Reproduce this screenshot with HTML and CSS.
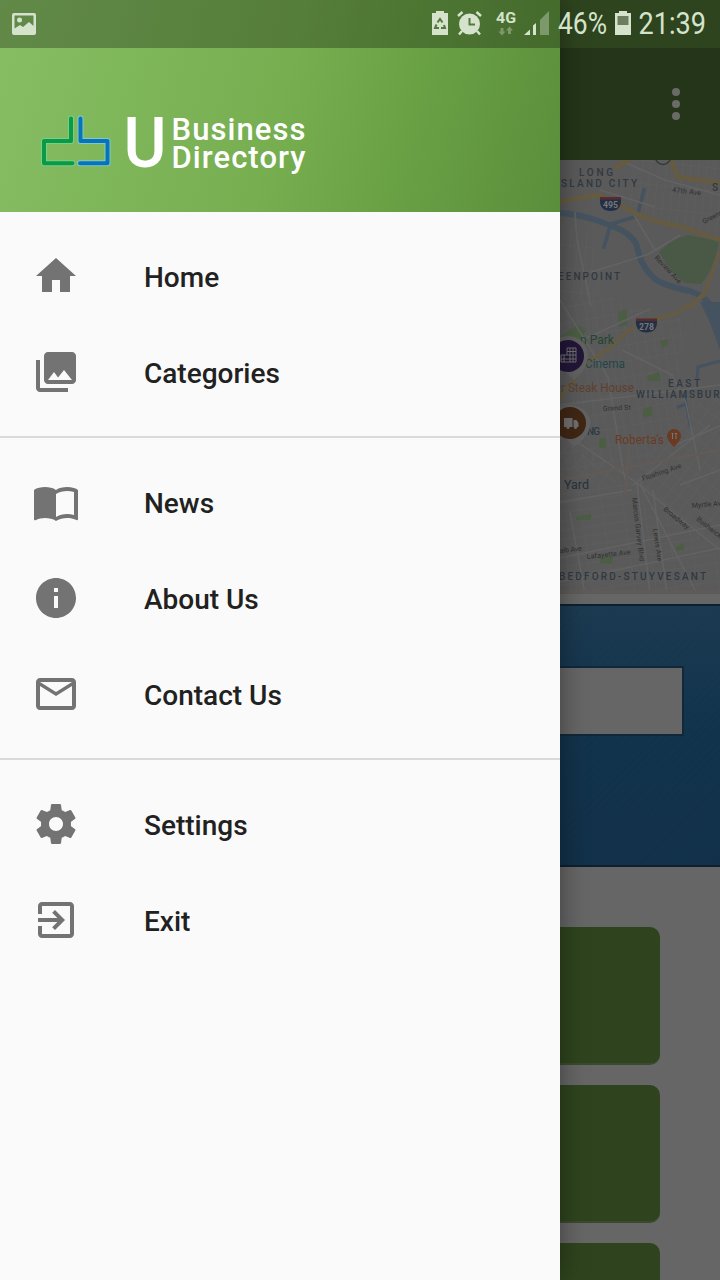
FILE: index.html
```html
<!DOCTYPE html>
<html lang="en">
<head>
<meta charset="utf-8">
<title>U Business Directory</title>
<link rel="stylesheet" href="styles.css">
</head>
<body>
<div class="screen">
  <main class="page">
    <header class="toolbar">
      <svg class="more" width="8" height="32" viewBox="0 0 8 32"><circle cx="4" cy="4" r="4"/><circle cx="4" cy="16" r="4"/><circle cx="4" cy="28" r="4"/></svg>
    </header>
    <svg class="map" width="160" height="434" viewBox="560 160 160 434">
      <defs>
        <pattern id="gridA" width="8" height="23" patternUnits="userSpaceOnUse" patternTransform="rotate(6)"><path d="M0 0V23M0 0H8"/></pattern>
        <pattern id="gridB" width="9" height="16" patternUnits="userSpaceOnUse" patternTransform="rotate(-10)"><path d="M0 0V16M0 0H9"/></pattern>
        <pattern id="gridC" width="21" height="9" patternUnits="userSpaceOnUse" patternTransform="rotate(-8)"><path d="M0 0V9M0 0H21"/></pattern>
        <pattern id="gridD" width="10" height="14" patternUnits="userSpaceOnUse" patternTransform="rotate(38)"><path d="M0 0V14M0 0H10"/></pattern>
      </defs>
      <rect class="land" x="560" y="160" width="160" height="434"/>
      <path fill="url(#gridA)" d="M630 160H720V240L665 222 630 210ZM560 225L590 235 605 290 560 305Z"/>
      <path fill="url(#gridB)" d="M560 305L605 295 645 310 690 320 680 360 700 400 640 470H560Z"/>
      <path fill="url(#gridC)" d="M560 485L640 475 720 560V594H560Z"/>
      <path fill="url(#gridD)" d="M632 478L700 400 720 395V560ZM560 430L630 480 560 490Z"/>
      <path class="park" d="M659 252Q670 240 688 235L719 241Q714 270 701 284L685 283 672 272Z"/>
      <path class="green" d="M618 312L627 309V325L619 327ZM647 376L659 372 661 381 648 381ZM643 409L652 406V416L643 417ZM599 438H606V448H599ZM576 517L591 514V520H576ZM600 558L613 556 612 564 600 563ZM676 547L684 543V550L676 551ZM660 341L668 339V345L662 348ZM560 337L577 325 586 330 576 345Z"/>
      <g class="water">
        <path d="M560 213Q581 214 604 223Q632 232 637 246Q640 266 655 279Q665 286 690 291Q706 296 714 310" stroke-width="6"/>
        <path d="M608 225L634 217M610 226L604 247M638 213L644 190" stroke-width="3.500"/>
        <path d="M720 361L698 367 697 378M678 407L686 404 690 425M686 403L685 397" stroke-width="3"/>
        <path class="river" d="M700 302H720V350Q713 330 708 318Z"/>
      </g>
      <g class="street">
        <path d="M575 212L577 240 591 306M591 272L649 254 680 235M626 163L665 180 720 195M600 190L655 207M634 215L655 250M560 300L608 377 625 480M622 350L672 375 686 403 700 470M560 430L637 483 720 550M560 405L720 385M637 483L650 594M633 485L710 425M560 502L632 490M570 512L585 594M560 558L720 525M560 582L720 548M653 490L667 594M675 445L720 426M680 485L720 470M560 350L650 309M640 484L695 590"/>
      </g>
      <path class="avenue" d="M630 435L625 495M560 480L720 450M560 592H720"/>
      <g class="highway">
        <path d="M560 201L598 195 626 208Q648 222 679 226L720 240M671 160L678 177 720 183M615 168L632 158" stroke-width="5"/>
        <path d="M560 399L585 364 610 348Q630 326 647 321L675 314 705 295M719 252Q710 281 704 293L689 308" stroke-width="3.500"/>
      </g>
      <g class="shield">
        <path fill="#222f46" d="M600 198H621Q622 211 610.500 211 599 211 600 198ZM636 319.500H657Q658 332.500 646.500 332.500 635 332.500 636 319.500Z"/>
        <path fill="#5a2a2c" d="M600 197H621V199.500H600ZM636 318.500H657V321H636Z"/>
        <text x="603" y="208" textLength="15" lengthAdjust="spacingAndGlyphs">495</text><text x="639" y="329.500" textLength="15" lengthAdjust="spacingAndGlyphs">278</text>
      </g>
      <circle class="route" cx="663" cy="157" r="7.5"/>
      <g class="area">
        <text x="579" y="176" textLength="34">LONG</text>
        <text x="561" y="187" textLength="76">SLAND CITY</text>
        <text x="712" y="191">S</text>
        <text x="558" y="280" textLength="62">EENPOINT</text>
        <text x="668" y="387" textLength="32">EAST</text>
        <text x="636" y="398" textLength="92">WILLIAMSBURG</text>
        <text x="587" y="435" textLength="13">NG</text>
        <text x="559" y="580" textLength="147">BEDFORD-STUYVESANT</text>
      </g>
      <g class="place">
        <text fill="#23462d" x="580" y="343.500" textLength="34" lengthAdjust="spacingAndGlyphs">n Park</text>
        <text fill="#234649" x="585" y="368" textLength="40" lengthAdjust="spacingAndGlyphs">Cinema</text>
        <text fill="#60402e" x="561" y="392" textLength="73" lengthAdjust="spacingAndGlyphs">r Steak House</text>
        <text fill="#6a3b22" x="615" y="444" textLength="49" lengthAdjust="spacingAndGlyphs">Roberta's</text>
        <text fill="#293139" x="564" y="489" textLength="25" lengthAdjust="spacingAndGlyphs">Yard</text>
      </g>
      <g class="road-name">
        <text x="603" y="411" textLength="28" transform="rotate(-3 603 411)">Grand St</text>
        <text x="672" y="192" textLength="29" transform="rotate(7 672 192)">47th Ave</text>
        <text x="704" y="224" transform="rotate(-28 704 224)">Greenpoint</text>
        <text x="654" y="258" textLength="36" transform="rotate(47 654 258)">Review Ave</text>
        <text x="643" y="481" textLength="41" transform="rotate(-19 643 481)">Flushing Ave</text>
        <text x="692" y="508" transform="rotate(-5 692 508)">Myrtle Ave</text>
        <text x="663" y="510" textLength="31" transform="rotate(39 663 510)">Broadway</text>
        <text x="696" y="520" transform="rotate(38 696 520)">Bushwick</text>
        <text x="632" y="498" textLength="64" transform="rotate(83 632 498)">Marcus Garvey Blvd</text>
        <text x="653" y="529" textLength="33" transform="rotate(82 653 529)">Lewis Ave</text>
        <text x="560" y="553" textLength="22" transform="rotate(-6 560 553)">alb Ave</text>
        <text x="587" y="559" textLength="44" transform="rotate(-6 587 559)">Lafayette Ave</text>
      </g>
      <path fill="#6a3b22" d="M674 447Q667 440 667 436A7 7 0 1 1 681 436Q681 440 674 447Z"/>
      <path class="utensils" d="M672.500 434V439M676 434V439M671.500 433.500H673.500M675 433.500H677"/>
      <g>
        <path class="pin" d="M548 356A20 20 0 0 1 588 356Q588 369 574 380ZM548 422A22 22 0 0 1 591 422Q590 436 574 447Z"/>
        <circle fill="#221638" cx="568" cy="356" r="16"/>
        <path class="building" d="M561 362V355H567V348H576V362ZM561 359H576M567 355H576M564 355V362M570 348V362M573 348V362M567 351.500H576"/>
        <circle fill="#402715" cx="570" cy="423" r="16"/>
        <path class="truck" d="M564 418H572.500V427H564ZM573.500 420H576.500L578.500 423V427H573.500Z"/>
        <circle class="truck" cx="568" cy="427.500" r="1.500"/><circle class="truck" cx="575.500" cy="427.500" r="1.500"/>
      </g>
    </svg>
    <section class="search"><div class="field"></div></section>
    <section class="cards"><div class="card"></div><div class="card"></div><div class="card"></div></section>
  </main>

  <aside class="drawer">
    <div class="brand">
      <svg width="280" height="70" viewBox="36 110 280 70">
        <g class="mark">
          <path stroke="#72d18b" stroke-width="6" d="M71 118.500V141H44V163.300H72.500"/>
          <path stroke="#80c7cf" stroke-width="6" d="M80.500 118.500V141H107.500V163.300H80"/>
          <path stroke="#0b9a43" stroke-width="4" d="M71 118.500V141H44V163.300H72.500"/>
          <path stroke="#0874b8" stroke-width="4" d="M80.500 118.500V141H107.500V163.300H80"/>
        </g>
        <g class="wordmark">
          <text class="initial" x="123.500" y="166.500" textLength="43" lengthAdjust="spacingAndGlyphs">U</text>
          <text x="171.500" y="139.500" textLength="134" lengthAdjust="spacing">Business</text>
          <text x="171.500" y="167.500" textLength="134" lengthAdjust="spacing">Directory</text>
        </g>
      </svg>
    </div>
    <nav class="menu">
      <ul class="group">
        <li class="item"><svg class="icon" viewBox="0 0 24 24"><path d="M10 20v-6h4v6h5v-8h3L12 3 2 12h3v8z"/></svg><span>Home</span></li>
        <li class="item"><svg class="icon" viewBox="0 0 24 24"><path d="M22 16V4c0-1.100-.9-2-2-2H8c-1.100 0-2 .9-2 2v12c0 1.100.9 2 2 2h12c1.100 0 2-.9 2-2zm-11-4l2.030 2.710L16 11l4 5H8l3-4zM2 6v14c0 1.100.9 2 2 2h14v-2H4V6H2z"/></svg><span>Categories</span></li>
      </ul>
      <ul class="group">
        <li class="item"><svg class="icon" viewBox="0 0 24 24"><path d="M21 5c-1.110-.35-2.330-.5-3.500-.5-1.950 0-4.050.4-5.500 1.500-1.450-1.100-3.550-1.500-5.500-1.500S2.450 4.900 1 6v14.650c0 .25.25.5.5.5.1 0 .15-.05.25-.05C3.100 20.450 5.050 20 6.500 20c1.950 0 4.050.4 5.500 1.500 1.350-.85 3.800-1.500 5.500-1.500 1.650 0 3.350.3 4.750 1.050.1.050.15.050.25.050.25 0 .5-.25.5-.5V6c-.6-.45-1.250-.75-2-1zm0 13.500c-1.100-.35-2.300-.5-3.500-.5-1.700 0-4.150.65-5.500 1.500V8c1.350-.85 3.800-1.500 5.500-1.500 1.200 0 2.400.15 3.500.5v11.500z"/></svg><span>News</span></li>
        <li class="item"><svg class="icon" viewBox="0 0 24 24"><path d="M12 2C6.480 2 2 6.480 2 12s4.480 10 10 10 10-4.480 10-10S17.520 2 12 2zm1 15h-2v-6h2v6zm0-8h-2V7h2v2z"/></svg><span>About Us</span></li>
        <li class="item"><svg class="icon" viewBox="0 0 24 24"><path d="M20 4H4c-1.100 0-2 .9-2 2v12c0 1.100.9 2 2 2h16c1.100 0 2-.9 2-2V6c0-1.100-.9-2-2-2zm0 14H4V8l8 5 8-5v10zm-8-7L4 6h16l-8 5z"/></svg><span>Contact Us</span></li>
      </ul>
      <ul class="group">
        <li class="item"><svg class="icon" viewBox="0 0 24 24"><path d="M19.430 12.980c.04-.32.07-.64.07-.98s-.03-.66-.07-.98l2.110-1.650c.19-.15.24-.42.12-.64l-2-3.460c-.12-.22-.39-.3-.61-.22l-2.490 1c-.52-.4-1.080-.73-1.690-.98l-.38-2.650C14.460 2.180 14.250 2 14 2h-4c-.25 0-.46.18-.49.42l-.38 2.650c-.61.25-1.170.59-1.690.98l-2.490-1c-.23-.09-.49 0-.61.22l-2 3.460c-.13.22-.07.49.12.64l2.110 1.650c-.04.32-.07.65-.07.98s.03.66.07.98l-2.110 1.650c-.19.15-.24.42-.12.640l2 3.460c.12.22.39.3.61.22l2.490-1c.52.4 1.080.73 1.690.98l.38 2.650c.03.24.24.42.49.42h4c.25 0 .46-.18.49-.42l.38-2.650c.61-.25 1.170-.59 1.690-.98l2.490 1c.23.09.49 0 .61-.22l2-3.460c.12-.22.07-.49-.12-.64l-2.110-1.650zM12 15.500c-1.930 0-3.500-1.570-3.500-3.500s1.570-3.500 3.500-3.500 3.500 1.570 3.500 3.500-1.570 3.500-3.500 3.500z"/></svg><span>Settings</span></li>
        <li class="item"><svg class="icon" viewBox="0 0 24 24"><path d="M10.090 15.590L11.500 17l5-5-5-5-1.410 1.410L12.670 11H3v2h9.670l-2.580 2.590zM19 3H5c-1.110 0-2 .9-2 2v4h2V5h14v14H5v-4H3v4c0 1.100.89 2 2 2h14c1.100 0 2-.9 2-2V5c0-1.100-.9-2-2-2z"/></svg><span>Exit</span></li>
      </ul>
    </nav>
  </aside>

  <div class="status">
    <svg class="picture" width="24" height="22" viewBox="0 0 24 22"><path fill-rule="evenodd" d="M2 0H22Q24 0 24 2V20Q24 22 22 22H2Q0 22 0 20V2Q0 0 2 0ZM2.500 2.500V15.500L8 12 11 14 17 9 21.500 13V2.500Z"/><circle cx="7.500" cy="7" r="2.500"/></svg>
    <svg width="140" height="28" viewBox="428 10 140 28">
      <path d="M432 13H436V11H444V13H448V35H432Z"/>
      <path class="recycle" d="M437.500 22.500L440 19 442.500 22.500M444 25L445 28H441M439 28H435L436.500 24.500"/>
      <circle cx="469.500" cy="24" r="10.500"/>
      <path class="alarm-legs" d="M458 16L462.500 12M476.500 12L481 16M462 31L459 34.500M477 31L480 34.500"/>
      <path class="clock-hands" d="M469.500 18V24.500H475"/>
      <text class="network" x="496" y="23" textLength="20" lengthAdjust="spacingAndGlyphs">4G</text>
      <path class="faint" d="M500.500 28H503.500V31.500H505.500L502 35.500 498.500 31.500H500.500ZM508 34H511V30.500H513L509.500 26.500 506 30.500H508Z"/>
      <path d="M524 35L530 29.500V35ZM533 35V25.500L536 23V35Z"/>
      <path class="faint" d="M540 35V20L549 11V35Z"/>
    </svg>
    <svg class="reading" width="152" height="32" viewBox="556 8 152 32">
      <text x="558" y="34" textLength="49" lengthAdjust="spacingAndGlyphs">46%</text>
      <path d="M615 13H619V11H627V13H631V35H615Z"/><path class="drained" d="M617.500 16H628.500V25H617.500Z"/>
      <text x="638.500" y="34" textLength="67.500" lengthAdjust="spacingAndGlyphs">21:39</text>
    </svg>
  </div>
</div>
</body>
</html>
```
FILE: styles.css
```css
* { box-sizing: border-box; }
body { margin: 0; font-family: Roboto, "Liberation Sans", sans-serif; }
.screen { position: relative; width: 720px; height: 1280px; overflow: hidden; background: #666; }
svg { display: block; flex: none; }

/* Dimmed page under the drawer */
.page { display: flex; flex-direction: column; height: 1280px; overflow: hidden; }
.toolbar { flex: none; height: 160px; padding: 88px 40px 0 0; display: flex; justify-content: flex-end; background: linear-gradient(#2e441e 48px, #243519 48px); }
.more { fill: #696b67; }
.map { align-self: flex-end; }
.map pattern path { stroke: #606060; stroke-width: 1; fill: none; }
.land { fill: #5a5a5a; }
.park { fill: #495945; }
.green { fill: #4b5e43; }
.water { stroke: #455360; fill: none; stroke-linecap: square; }
.water .river { fill: #455360; stroke: none; }
.street { stroke: #636363; stroke-width: 1.5; fill: none; }
.avenue { stroke: #605b59; stroke-width: 3; fill: none; }
.highway { stroke: #655b42; fill: none; }
.shield { fill: #777; font-size: 9px; font-weight: 700; }
.route { fill: #5c5c5c; stroke: #333a3c; stroke-width: 1.5; }
.area { fill: #303942; font-size: 10px; font-weight: 500; }
.place { font-size: 12px; }
.road-name { fill: #303030; font-size: 7px; }
.utensils { stroke: #777; stroke-width: 1; fill: none; }
.pin { fill: #626262; }
.building { stroke: #777; stroke-width: .9; fill: none; }
.truck { fill: #707070; }
.search { flex: none; margin-top: 10px; height: 263px; padding: 60px 36px 0; border: solid #0d202f; border-width: 2px 0; background: repeating-linear-gradient(135deg, transparent 0 4px, rgba(0,0,0,.025) 4px 6px), linear-gradient(#1c3b52, #12344d 45%, #12314a); }
.field { height: 70px; border: 2px solid #11283a; background: #666; }
.cards { display: flex; flex-direction: column; gap: 20px; padding: 60px 60px 0; }
.card { flex: none; height: 138px; border-radius: 10px; background: #2f441e; border-bottom: 2px solid #394b2d; }

/* Navigation drawer */
.drawer { position: absolute; top: 0; left: 0; width: 560px; height: 1280px; background: #fafafa; box-shadow: 0 0 26px rgba(0,0,0,.4); }
.brand { height: 212px; padding: 110px 0 0 36px; background: linear-gradient(105deg, #87be64 0%, #76ae50 50%, #6ba346 68%, #5b8e3b 100%); }
.mark { fill: none; stroke-linecap: round; stroke-linejoin: round; }
.wordmark { fill: #fff; font-size: 31px; font-weight: 500; }
.wordmark .initial { font-size: 71px; }
.group { margin: 0; padding: 16px 0; list-style: none; }
.group + .group { border-top: 2px solid #dadada; }
.item { display: flex; align-items: center; gap: 64px; height: 96px; padding-left: 32px; color: #212121; font-size: 28px; font-weight: 500; line-height: 32px; }
.item span { padding-top: 4px; }
.icon { width: 48px; height: 48px; fill: #737373; }

/* System status bar */
.status { position: absolute; top: 0; left: 0; width: 720px; height: 48px; padding: 0 12px; display: flex; align-items: center; fill: #d5e3cc; background: linear-gradient(90deg, rgba(0,0,0,.28) 560px, transparent 560px); }
.picture { margin-right: auto; }
.reading { margin-left: -12px; font-size: 31.5px; }
.recycle, .clock-hands { fill: none; stroke: #55793d; stroke-width: 2; }
.alarm-legs { stroke: #d5e3cc; stroke-width: 2.5; }
.network { font-size: 15px; font-weight: 700; }
.faint { fill: #7d996b; }
.drained { fill: #6c7d60; }
```
